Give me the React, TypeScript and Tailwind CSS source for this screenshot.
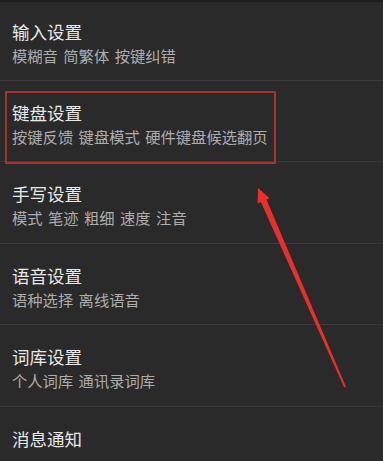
import React from "react";

const rows: { title: string; sub?: string; h: string }[] = [
  { title: "输入设置", sub: "模糊音 简繁体 按键纠错", h: "h-[79px]" },
  { title: "键盘设置", sub: "按键反馈 键盘模式 硬件键盘候选翻页", h: "h-[81px]" },
  { title: "手写设置", sub: "模式 笔迹 粗细 速度 注音", h: "h-[82px]" },
  { title: "语音设置", sub: "语种选择 离线语音", h: "h-[81px]" },
  { title: "词库设置", sub: "个人词库 通讯录词库", h: "h-[82px]" },
  { title: "消息通知", h: "h-[60px]" },
];

export default function App() {
  return (
    <div
      className="relative w-[383px] h-[461px] overflow-hidden bg-[#2a2a2a]"
      style={{ fontFamily: '"Noto Sans CJK SC", "Noto Sans", sans-serif' }}
    >
      <div className="h-[2px] bg-[#1f1f1f]" />
      {rows.map((r, i) => (
        <div
          key={r.title}
          className={`${r.h} ${i < rows.length - 1 ? "border-b border-[#3b3b3b]" : ""} ${i === 0 ? "pt-[18px]" : "pt-[20px]"} pl-[12px]`}
        >
          <div className="text-[17.5px] leading-[24px] text-[#e8e8e8]">{r.title}</div>
          {r.sub && (
            <div className="mt-[1px] text-[15.3px] leading-[20px] text-[#adadad] [word-spacing:2px]">
              {r.sub}
            </div>
          )}
        </div>
      ))}
      <div className="absolute left-[5px] top-[91px] w-[271px] h-[73px] border-2 border-solid border-[#a83232]" />
      <svg className="absolute left-0 top-0" width="383" height="461" viewBox="0 0 383 461">
        <polygon
          fill="#ea2f2a"
          points="258,188 269.6,198.2 266.4,199.6 345.8,386.6 344.2,387.4 260.9,202 257.6,203.4"
        />
      </svg>
    </div>
  );
}
